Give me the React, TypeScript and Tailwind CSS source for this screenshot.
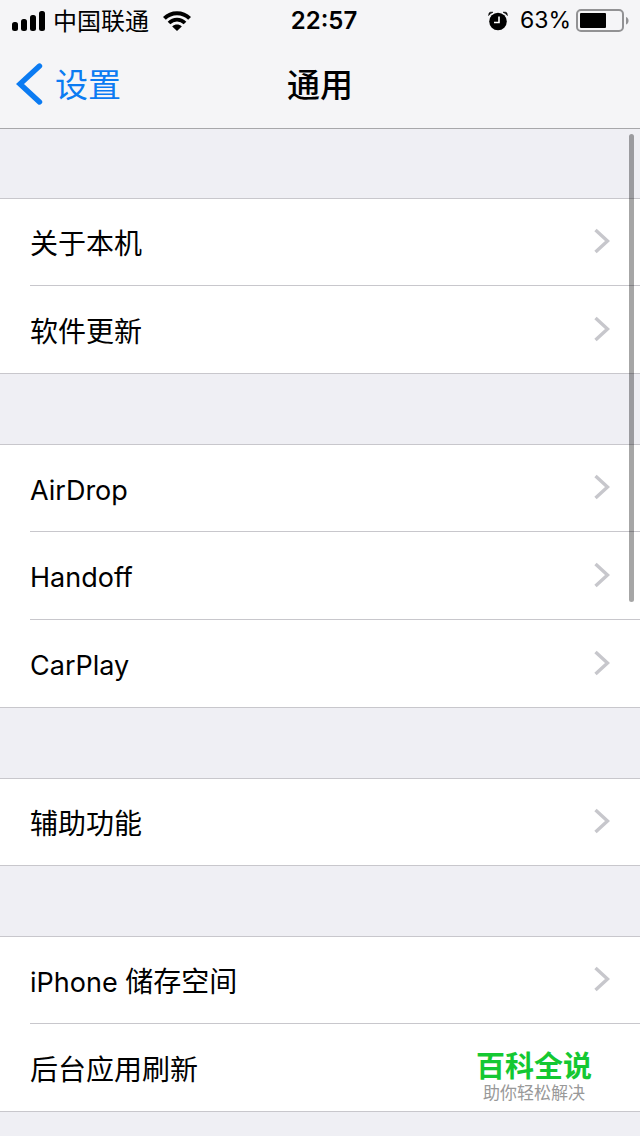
import { useState } from 'react';

type Row = { latin?: string; label?: string; chevron?: boolean; sponsor?: boolean };

const groups: Row[][] = [
    [{ label: '关于本机', chevron: true }, { label: '软件更新', chevron: true }],
    [
        { latin: 'AirDrop', chevron: true },
        { latin: 'Handoff', chevron: true },
        { latin: 'CarPlay', chevron: true },
    ],
    [{ label: '辅助功能', chevron: true }],
    [{ latin: 'iPhone ', label: '储存空间', chevron: true }, { label: '后台应用刷新', sponsor: true }],
];

const rowKey = (row: Row) => `${row.latin ?? ''}${row.label ?? ''}`;

function SignalIcon() {
    return (
        <svg width="34" height="20" viewBox="0 0 34 20" aria-hidden="true">
            <rect x="0" y="11" width="6" height="9" rx="2.5" />
            <rect x="9" y="8" width="6" height="12" rx="2.5" />
            <rect x="18" y="4" width="6" height="16" rx="2.5" />
            <rect x="27" y="0" width="6" height="20" rx="2.5" />
        </svg>
    );
}

function WifiIcon() {
    return (
        <svg width="28" height="20" viewBox="0 0 28 20" aria-hidden="true">
            <path d="M1.4 7.4C8.4 .4 19.6 .4 26.6 7.4" fill="none" stroke="#000" strokeWidth="4" />
            <path d="M6 12C10.6 7.6 17.4 7.6 22 12" fill="none" stroke="#000" strokeWidth="3.8" />
            <path d="M9.2 15.4C12 12.8 16 12.8 18.8 15.4L14 20Z" />
        </svg>
    );
}

function AlarmIcon() {
    return (
        <svg width="20" height="20" viewBox="0 0 20 20" aria-hidden="true">
            <circle cx="10" cy="10.5" r="8.8" />
            <path d="M.6 4.6L1 2.4Q1.4 1.2 2.6 1.2L5 1.2Q2.4 2.2 .6 4.6Z" stroke="#000" strokeWidth=".6" />
            <path d="M19.4 4.6L19 2.4Q18.6 1.2 17.4 1.2L15 1.2Q17.6 2.2 19.4 4.6Z" stroke="#000" strokeWidth=".6" />
            <path d="M11 5.5V11.5H6" fill="none" stroke="#fff" strokeWidth="1.6" />
        </svg>
    );
}

function BatteryIcon() {
    return (
        <svg width="53" height="24" viewBox="0 0 53 24" aria-hidden="true">
            <rect x="1" y="1" width="46" height="21" rx="4" fill="none" stroke="#929294" strokeWidth="2" />
            <rect x="4" y="4" width="26" height="15" rx="1" />
            <path d="M50 8C53.4 9 53.4 14.5 50 15.5Z" fill="#929294" />
        </svg>
    );
}

function Chevron() {
    return (
        <svg width="17" height="26" viewBox="0 0 17 26" aria-hidden="true">
            <path d="M2.5 2L14.5 13L2.5 24" fill="none" stroke="#c7c7cc" strokeWidth="3.4" />
        </svg>
    );
}

function StatusBar() {
    return (
        <div className="grid h-10 grid-cols-[1fr_auto_1fr] items-center pt-px pr-1 pl-3 text-2xl">
            <div className="flex items-center">
                <SignalIcon />
                <span className="mr-[14px] ml-[7px] pt-0.5">中国联通</span>
                <WifiIcon />
            </div>
            <time className="font-semibold">22:57</time>
            <div className="flex items-center justify-end pr-[7px]">
                <AlarmIcon />
                <span className="mr-[5px] ml-3 text-[23px]">63%</span>
                <BatteryIcon />
            </div>
        </div>
    );
}

function NavBar() {
    return (
        <nav className="grid h-[88px] grid-cols-[1fr_auto_1fr] items-center px-4 text-[33px]">
            <button type="button" className="flex items-center gap-3 justify-self-start text-[#0b7bf2]">
                <svg width="27" height="44" viewBox="0 0 27 44" aria-hidden="true">
                    <path d="M23.5 4L4 22L23.5 40" fill="none" stroke="currentColor" strokeWidth="5.4" strokeLinecap="round" />
                </svg>
                <span className="pt-1">设置</span>
            </button>
            <h1 className="pt-1 font-medium">通用</h1>
        </nav>
    );
}

function SponsorMark() {
    return (
        <div className="absolute right-12 bottom-2 flex flex-col items-center">
            <strong className="text-[29px] leading-8 font-bold text-[#14c832]">百科全说</strong>
            <span className="text-[17px] leading-5 text-[#999999]">助你轻松解决</span>
        </div>
    );
}

export default function App() {
    const [selected, setSelected] = useState<string | null>(null);

    return (
        <div className="relative min-h-screen bg-[#efeff4] font-[Inter,'Noto_Sans_CJK_SC',sans-serif] text-black">
            <header className="border-b border-[#a7a7aa] bg-[#f5f5f7]">
                <StatusBar />
                <NavBar />
            </header>

            <main className="flex flex-col gap-[70px] pt-[69px]">
                {groups.map((rows) => (
                    <ul key={rowKey(rows[0])} className="border-y border-[#c8c7cc] bg-white">
                        {rows.map((row) => (
                            <li key={rowKey(row)} className="group relative pl-[30px]">
                                <button
                                    type="button"
                                    aria-pressed={selected === rowKey(row)}
                                    onClick={() => setSelected(rowKey(row))}
                                    className="flex h-[88px] w-full items-center justify-between border-b border-[#c8c7cc] pr-[30px] pb-0.5 text-left text-[28px] group-first:h-[87px] group-last:h-[87px] group-last:border-b-0 group-only:h-[86px]"
                                >
                                    <span className="pt-1.5 whitespace-pre">
                                        {row.latin && <span className="text-[27px]">{row.latin}</span>}
                                        {row.label}
                                    </span>
                                    {row.chevron && <Chevron />}
                                </button>
                                {row.sponsor && <SponsorMark />}
                            </li>
                        ))}
                    </ul>
                ))}
            </main>

            {/* scroll indicator */}
            <div className="absolute top-[134px] right-1.5 h-[468px] w-[5px] rounded-full bg-black/35" />
        </div>
    );
}
